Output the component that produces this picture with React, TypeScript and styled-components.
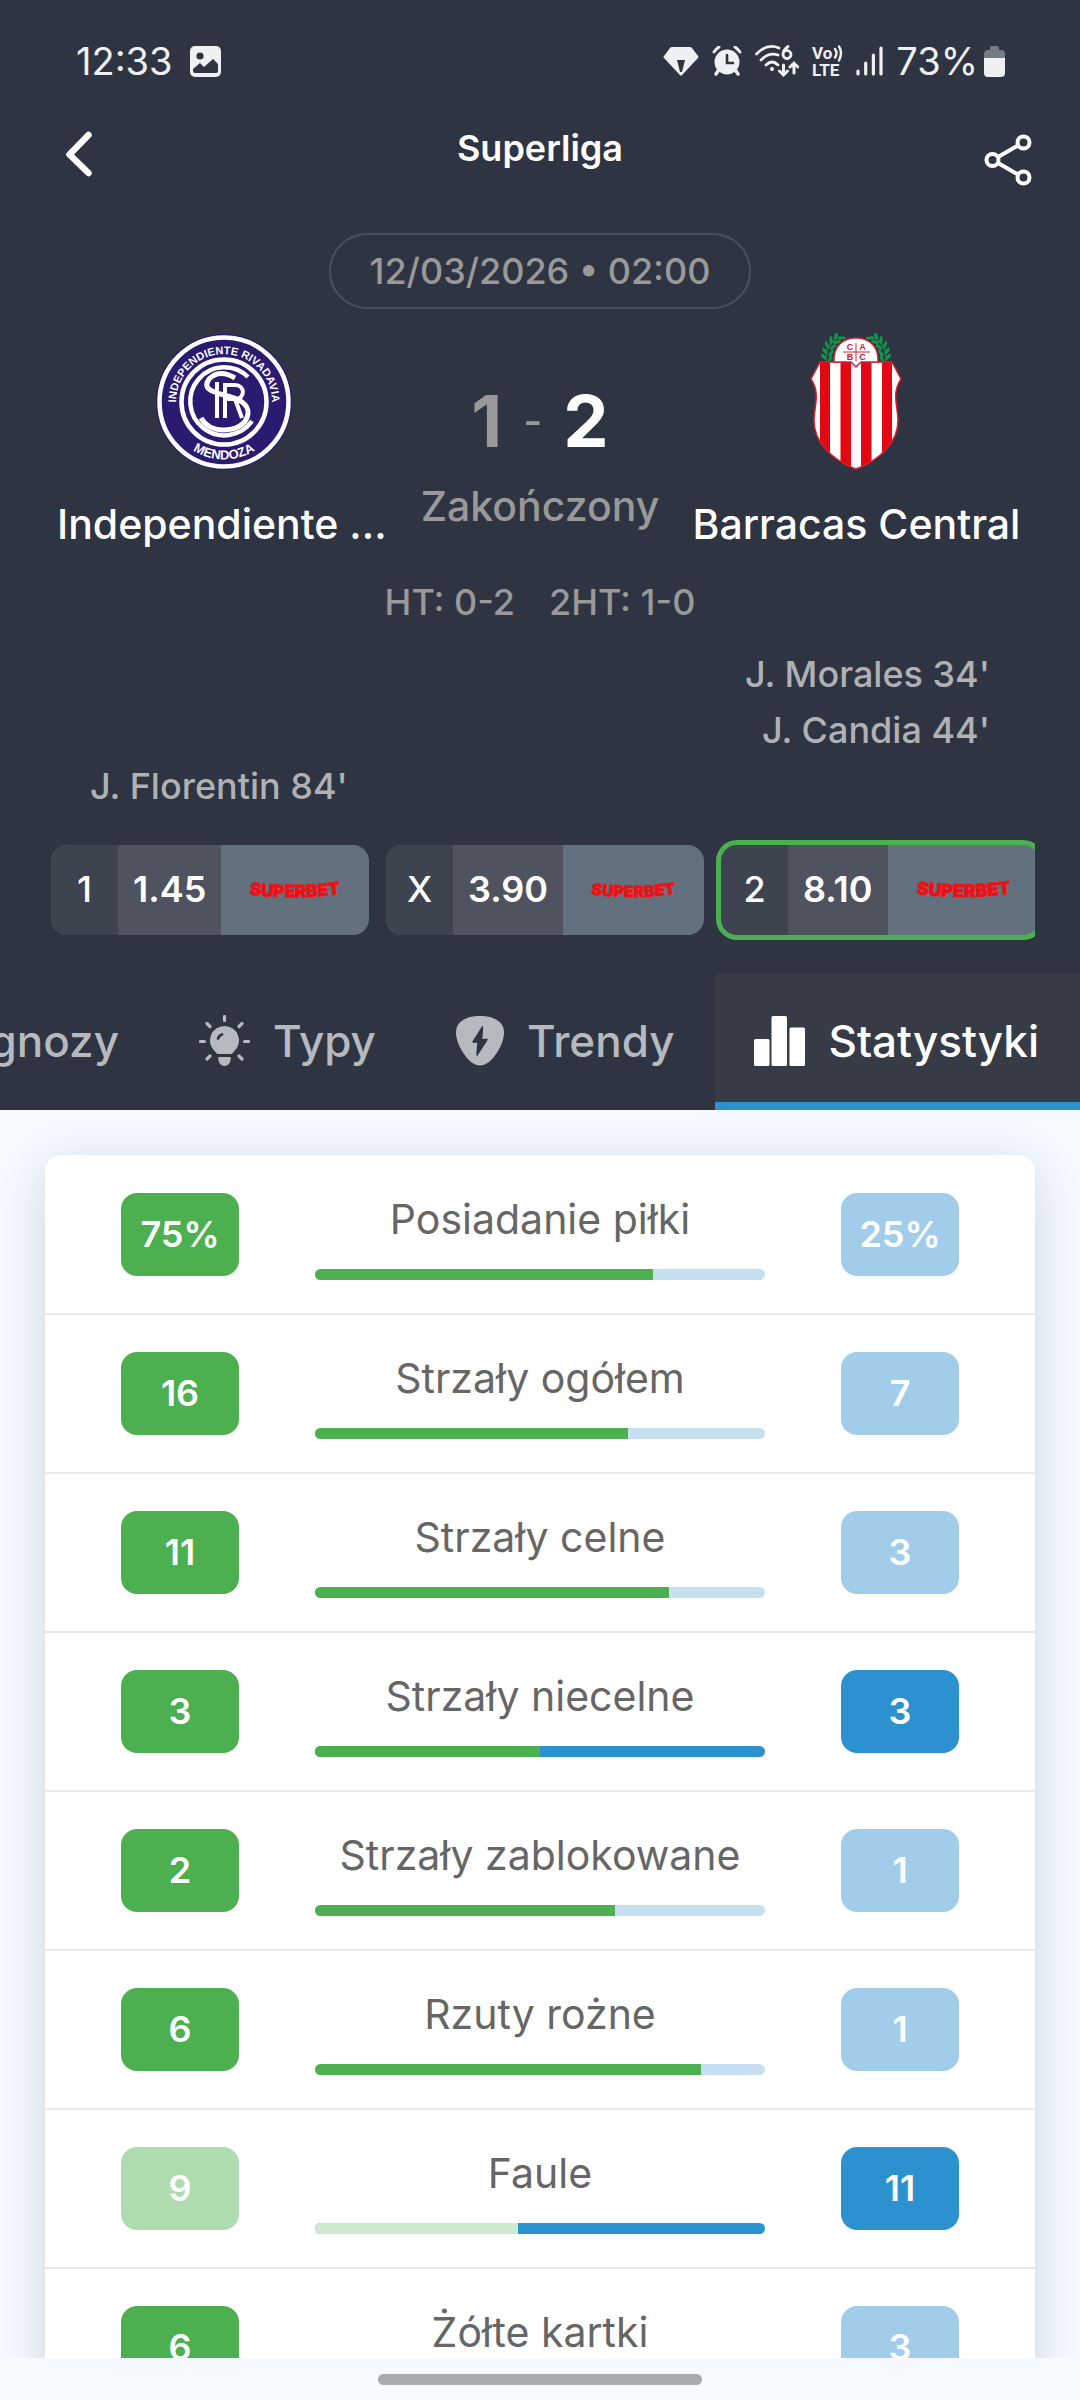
import React from "react";
import styled, { createGlobalStyle } from "styled-components";

const color = {
  header: "#2e3441",
  tabActive: "#363b46",
  page: "#f4faff",
  green: "#4caf50",
  greenSoft: "#aedbb0",
  greenTrack: "#cfe9d0",
  blue: "#2c91cf",
  blueSoft: "#a1cdea",
  blueTrack: "#c6e0f1",
  muted: "#999999",
  scorer: "#b0b1b4",
  status: "#eff0f4",
};

const text = {
  large: "41px",
  medium: "36px",
};

const GlobalStyle = createGlobalStyle`
  * { box-sizing: border-box; }
  body { margin: 0; background: ${color.page}; font-family: Inter, Roboto, sans-serif; }
  button { font: inherit; color: inherit; background: none; border: 0; padding: 0; cursor: pointer; }
  h1, h2, p, ul { margin: 0; padding: 0; font: inherit; list-style: none; }
  svg { display: block; flex: none; }
`;

const Screen = styled.div`
  display: flex;
  flex-direction: column;
  height: 100vh;
  overflow: hidden;
`;

const Header = styled.header`
  flex: none;
  background: ${color.header};
  color: #fff;
`;

const StatusBar = styled.div`
  display: flex;
  align-items: center;
  justify-content: space-between;
  height: 122px;
  padding: 0 75px 0 76px;
  color: ${color.status};
  font-size: 38px;
  line-height: 48px;
`;

const StatusGroup = styled.div<{ $gap: number }>`
  display: flex;
  align-items: center;
  gap: ${(p) => p.$gap}px;
`;

const TitleBar = styled.div`
  display: grid;
  grid-template-columns: 1fr auto 1fr;
  height: 111px;
  padding: 0 48px;
`;

const IconButton = styled.button<{ $end?: boolean }>`
  justify-self: ${(p) => (p.$end ? "end" : "start")};
  align-self: start;
  padding: ${(p) => (p.$end ? "12px 0 0" : "9px 0 0 16px")};
`;

const Title = styled.h1`
  padding-top: 3px;
  font-size: ${text.medium};
  line-height: 46px;
  font-weight: 600;
`;

const Kickoff = styled.time`
  display: block;
  width: fit-content;
  margin: 0 auto;
  padding: 0 38px;
  border: 2px solid #4a505c;
  border-radius: 38px;
  color: ${color.muted};
  font-size: ${text.medium};
  line-height: 72px;
  font-weight: 500;
`;

const Match = styled.section`
  display: grid;
  grid-template-columns: minmax(0, 10fr) minmax(0, 9fr) minmax(0, 10fr);
  height: 250px;
  padding: 24px 57px 0;
`;

const Team = styled.div`
  display: flex;
  flex-direction: column;
  align-items: center;
`;

const Crest = styled.div`
  display: flex;
  height: 138px;
`;

const TeamName = styled.h2<{ $align: string }>`
  align-self: stretch;
  margin-top: 26px;
  font-size: ${text.large};
  line-height: 54px;
  font-weight: 500;
  text-align: ${(p) => p.$align};
  white-space: nowrap;
`;

const Result = styled.div`
  display: flex;
  flex-direction: column;
  align-items: center;
  padding-top: 43px;
  color: ${color.muted};
`;

const Score = styled.div`
  display: flex;
  align-items: center;
  gap: 21px;
  font-size: 72px;
  line-height: 90px;
  font-weight: 700;
`;

const Goals = styled.span<{ $winner?: boolean }>`
  color: ${(p) => (p.$winner ? "#fff" : color.muted)};
`;

const Dash = styled.span`
  font-size: ${text.large};
  font-weight: 500;
`;

const MatchState = styled.p`
  margin-top: 13px;
  font-size: ${text.large};
  line-height: 54px;
  font-weight: 500;
  white-space: nowrap;
`;

const Halves = styled.div`
  display: flex;
  justify-content: center;
  gap: 34px;
  padding: 20px 0;
  color: ${color.muted};
  font-size: ${text.medium};
  line-height: 46px;
  font-weight: 500;
`;

const Scorers = styled.ul`
  padding: 1px 90px 0;
  color: ${color.scorer};
  font-size: ${text.medium};
  line-height: 56px;
  font-weight: 500;
`;

const Scorer = styled.li<{ $away?: boolean }>`
  text-align: ${(p) => (p.$away ? "right" : "left")};
`;

const OddsStrip = styled.div`
  display: flex;
  gap: 17px;
  margin: 26px 45px 0 46px;
  padding: 5px;
  overflow: hidden;
`;

const Odd = styled.button<{ $won?: boolean }>`
  display: flex;
  flex: none;
  width: 318px;
  height: 90px;
  overflow: hidden;
  border-radius: 16px;
  box-shadow: ${(p) => (p.$won ? `0 0 0 5px ${color.green}` : "none")};
  font-size: ${text.medium};
  line-height: 88px;
  background: #62717d;
`;

const Pick = styled.span`
  width: 67px;
  height: 90px;
  background: #3e444f;
  font-weight: 500;
`;

const Price = styled.span`
  height: 90px;
  padding: 0 15px;
  background: #4e535f;
  font-weight: 600;
`;

const Bookmaker = styled.span`
  display: flex;
  align-items: center;
  flex: 1;
  height: 90px;
  padding: 0 27px;
`;

const LogoSvg = styled.svg`
  flex: 1 1 auto;
  width: 100%;
  overflow: visible;
`;

const Tabs = styled.nav`
  display: flex;
  justify-content: flex-end;
  margin-top: 34px;
  overflow: hidden;
`;

const Tab = styled.button<{ $active?: boolean }>`
  display: flex;
  flex: none;
  align-items: center;
  gap: 23px;
  height: 136px;
  padding: 6px 41px 0 39px;
  border-bottom: 8px solid ${(p) => (p.$active ? color.blue : "transparent")};
  background: ${(p) => (p.$active ? color.tabActive : "transparent")};
  color: ${(p) => (p.$active ? "#fff" : "#b6b9bf")};
  font-size: 44px;
  line-height: 54px;
  font-weight: 500;
`;

const Content = styled.main`
  flex: 1;
  min-height: 0;
  overflow-y: auto;
  scrollbar-width: none;
  padding: 45px 45px 0;
`;

const Card = styled.ul`
  padding-top: 1px;
  border-radius: 16px;
  background: #fff;
  box-shadow: 0 10px 48px rgba(40, 60, 60, 0.17);
`;

const StatRow = styled.li`
  display: grid;
  grid-template-columns: 3fr 5fr 3fr;
  justify-items: center;
  align-items: center;
  height: 159px;
  border-bottom: 2px solid #e7e9ea;
`;

const Badge = styled.span<{ $bg: string }>`
  width: 118px;
  border-radius: 16px;
  background: ${(p) => p.$bg};
  color: #fff;
  font-size: ${text.medium};
  line-height: 83px;
  font-weight: 600;
  text-align: center;
`;

const StatBody = styled.div`
  display: flex;
  flex-direction: column;
  justify-self: stretch;
  gap: 23px;
  padding-top: 2px;
`;

const StatName = styled.p`
  color: #666;
  font-size: ${text.large};
  line-height: 54px;
  text-align: center;
  white-space: nowrap;
`;

const Track = styled.div<{ $bg: string }>`
  height: 11px;
  overflow: hidden;
  border-radius: 6px;
  background: ${(p) => p.$bg};
`;

const Fill = styled.div<{ $bg: string }>`
  height: 11px;
  background: ${(p) => p.$bg};
`;

const SystemNav = styled.footer`
  display: flex;
  flex: none;
  justify-content: center;
  height: 42px;
  padding-top: 16px;
  background: ${color.page};
`;

const Handle = styled.span`
  width: 30%;
  height: 11px;
  border-radius: 6px;
  background: #a7abae;
`;

const PictureIcon = () => (
  <svg width="31" height="31" viewBox="0 0 31 31">
    <rect width="31" height="31" rx="5" fill="currentColor" />
    <circle cx="10" cy="10" r="3.6" fill={color.header} />
    <path d="M3 23l7-6 4 4 9-8 5 5v7q0 2-2 2H5q-2 0-2-2z" fill={color.header} />
  </svg>
);

const DiamondIcon = () => (
  <svg width="36" height="29" viewBox="0 0 36 29">
    <path d="M9 0h18q1 0 2 1l6 8q1 1 0 2L20 27q-2 3-4 0L1 11q-1-1 0-2l6-8q1-1 2-1z" fill="currentColor" />
    <path d="M14 13h8l-3 12h-2z" fill={color.header} />
  </svg>
);

const AlarmIcon = () => (
  <svg width="30" height="30" viewBox="0 0 30 30" fill="none" stroke="currentColor" strokeLinecap="round">
    <circle cx="15" cy="16" r="12.5" fill="currentColor" stroke="none" />
    <path d="M2 6q2-3 5-5M28 6q-2-3-5-5" strokeWidth="3" />
    <path d="M6 25l-2 3M24 25l2 3" strokeWidth="3.4" />
    <path d="M15 9v8h6" stroke={color.header} strokeWidth="2.6" />
  </svg>
);

const WifiIcon = () => (
  <svg width="44" height="32" viewBox="0 0 44 32" fill="none" stroke="currentColor" strokeWidth="2.8" strokeLinecap="round">
    <path d="M1.500 9Q12-2 24 3M6 15q8-8 17-5M11 20q6-6 12 0" />
    <circle cx="17" cy="24" r="2" fill="currentColor" stroke="none" />
    <path d="M33 1.500Q28 5 28 10a4 4 0 1 0 2-4" />
    <path d="M28.500 20v10m-4-4l4 4 4-4M39 28V18m-4 4l4-4 4 4" strokeWidth="3" />
  </svg>
);

const VolteIcon = () => (
  <svg width="31" height="34" viewBox="0 0 31 34" fill="currentColor" overflow="visible">
    <text x="0" y="15" fontFamily="Roboto, sans-serif" fontSize="17" fontWeight="700">Vo</text>
    <text x="0" y="32" fontFamily="Roboto, sans-serif" fontSize="17" fontWeight="700">LTE</text>
    <path d="M23 5q3 4 0 8.500M27 2.500q4 6 0 14" fill="none" stroke="currentColor" strokeWidth="2.400" strokeLinecap="round" />
  </svg>
);

const SignalIcon = () => (
  <svg width="27" height="30" viewBox="0 0 27 30" stroke="currentColor" strokeWidth="3.200" strokeLinecap="round">
    <path d="M2 25v3M9.700 17v11M17.400 9v19M25 2v26" />
  </svg>
);

const BatteryIcon = () => (
  <svg width="21" height="32" viewBox="0 0 21 32">
    <path d="M6 3q0-2 2-2h5q2 0 2 2v2h2q4 0 4 4v4H0V9q0-4 4-4h2z" fill="#747c85" />
    <path d="M0 13h21v15q0 4-4 4H4q-4 0-4-4z" fill="currentColor" />
  </svg>
);

const BackIcon = () => (
  <svg width="30" height="46" viewBox="0 0 30 46" fill="none" stroke="#fff" strokeWidth="6.500" strokeLinecap="round" strokeLinejoin="round">
    <path d="M24.500 4L5.500 23.500l19 18.500" />
  </svg>
);

const ShareIcon = () => (
  <svg width="48" height="52" viewBox="0 0 48 52" fill="none" stroke="#fff" strokeWidth="4">
    <circle cx="8.500" cy="26" r="6" />
    <circle cx="39.500" cy="8.500" r="6" />
    <circle cx="39.500" cy="43.500" r="6" />
    <path d="M14 23l20-11.500M14 29l20 11.500" />
  </svg>
);

const IndependienteCrest = () => (
  <svg width="138" height="138" viewBox="-1 -1 138 138" role="img" aria-label="Independiente Rivadavia">
    <defs>
      <path id="crest-top" d="M20.700 76.300A48 48 0 1 1 115.300 76.300" />
      <path id="crest-bottom" d="M10.500 68a57.500 57.500 0 0 0 115 0" />
    </defs>
    <circle cx="68" cy="68" r="68" fill="#2a1a70" />
    <g fill="none" stroke="#fff">
      <circle cx="68" cy="68" r="64.500" strokeWidth="4.500" />
      <circle cx="68" cy="68" r="42.500" strokeWidth="4.500" />
      <path d="M92 43A34 34 0 1 0 96 87" strokeWidth="4.500" />
      <path d="M79 44Q64 35 54 44c-9 10 2 14 14 17 16 4 25 9 24 19-2 12-14 16-25 16-10 0-18-5-22-12" strokeWidth="5" />
      <path d="M61 48v36M69 84V51h10c10 0 11 14 0 14H69M79 65l7 19" strokeWidth="4" />
    </g>
    <g fill="#fff" fontFamily="Liberation Sans, sans-serif" fontWeight="700">
      <text textAnchor="middle" fontSize="11">
        <textPath href="#crest-top" startOffset="50%">INDEPENDIENTE RIVADAVIA</textPath>
      </text>
      <text textAnchor="middle" fontSize="13">
        <textPath href="#crest-bottom" startOffset="50%">MENDOZA</textPath>
      </text>
    </g>
  </svg>
);

const leaves = [
  [4, 24, -10],
  [5, 18, 0],
  [7, 12, 15],
  [11, 7, 35],
  [16, 3, 55],
];

const BarracasCrest = () => (
  <svg width="94" height="138" viewBox="0 0 94 138" role="img" aria-label="Barracas Central">
    <defs>
      <clipPath id="shield">
        <path d="M11 29h72l9 17c-9 14-4 24-3 40 1 24-20 42-42 50C25 128 4 110 5 86c1-16 6-26-3-40z" />
      </clipPath>
      <g id="laurel">
        <path d="M17 28Q15 12 32 3" fill="none" stroke="#14934a" strokeWidth="1.200" />
        {leaves.map(([x, y, r]) => (
          <g key={y} fill="#14934a">
            <ellipse cx={x + 11} cy={y} rx="1.600" ry="4" transform={`rotate(${r - 35} ${x + 11} ${y})`} />
            <ellipse cx={x + 17} cy={y + 2} rx="1.600" ry="4" transform={`rotate(${r + 35} ${x + 17} ${y + 2})`} />
          </g>
        ))}
      </g>
    </defs>
    <use href="#laurel" />
    <use href="#laurel" transform="translate(94 0) scale(-1 1)" />
    <g clipPath="url(#shield)">
      <rect width="94" height="138" fill="#fff" />
      <path d="M11 28h10v110H11zM31.500 28h10.500v110H31.500zM52 28h10.500v110H52zM73 28h10v110H73z" fill="#e30613" />
    </g>
    <path d="M11 29h72l9 17c-9 14-4 24-3 40 1 24-20 42-42 50C25 128 4 110 5 86c1-16 6-26-3-40z" fill="none" stroke="#d81e2c" strokeWidth="1.500" />
    <path d="M25 29C24 13 34 5 47 5s23 8 22 24H52l-5 5-5-5z" fill="#fff" stroke="#d81e2c" strokeWidth="1.500" />
    <path d="M34 19h27M47 10v18" stroke="#d81e2c" strokeWidth="1" />
    <g fill="#c8202c" fontFamily="Liberation Sans, sans-serif" fontWeight="700" fontSize="9" textAnchor="middle">
      <text x="41" y="17">C</text>
      <text x="53.500" y="17">A</text>
      <text x="41" y="27">B</text>
      <text x="53.500" y="27">C</text>
    </g>
  </svg>
);

const SuperbetLogo = ({ id }: { id: string }) => (
  <LogoSvg viewBox="0 0 92 22" role="img" aria-label="Superbet">
    <path id={id} d="M-4 14.500Q46 22 96 14" fill="none" />
    <text fill="#f00f12" stroke="#f00f12" strokeWidth="0.600" fontFamily="Inter, sans-serif" fontSize="17" fontWeight="900" textAnchor="middle">
      <textPath href={`#${id}`} startOffset="50%">SUPERBET</textPath>
    </text>
  </LogoSvg>
);

const BulbIcon = () => (
  <svg width="51" height="52" viewBox="0 0 51 52">
    <path d="M25.500 11a14.500 14.500 0 0 1 9.500 25.500Q33 39 32 39H19q-1 0-3-2.500A14.500 14.500 0 0 1 25.500 11z" fill="currentColor" />
    <path d="M20 42h11q1 0 .8 2-1 7-6.300 7T19.200 44q-.2-2 .8-2z" fill="currentColor" />
    <path d="M25.500 1.500v4M1.500 26.500h4M45.500 26.500h4M8 8.500l3 3M43 8.500l-3 3M8 44l3-3M43 44l-3-3" stroke="currentColor" strokeWidth="3.200" strokeLinecap="round" />
    <path d="M19 23.500q1-3 4-4" fill="none" stroke={color.header} strokeWidth="2.800" strokeLinecap="round" />
  </svg>
);

const TrendIcon = () => (
  <svg width="48" height="50" viewBox="0 0 48 50">
    <path d="M24 0c12 0 24 4 24 17 0 11-9 24-15 29q-9 7-18 0C9 41 0 28 0 17 0 4 12 0 24 0z" fill="currentColor" />
    <path d="M26.500 11L17 26h5l-1 13 10-15.500h-5.500z" fill={color.header} stroke={color.header} strokeWidth="1.500" strokeLinejoin="round" />
  </svg>
);

const StatsIcon = () => (
  <svg width="51" height="50" viewBox="0 0 51 50" fill="currentColor">
    <rect y="23" width="15.500" height="27" rx="1.500" />
    <rect x="17.500" width="15.500" height="50" rx="1.500" />
    <rect x="35.500" y="11.500" width="15.500" height="38.500" rx="1.500" />
  </svg>
);

const odds = [
  { pick: "1", price: "1.45" },
  { pick: "X", price: "3.90" },
  { pick: "2", price: "8.10", won: true },
];

const stats = [
  { name: "Posiadanie piłki", home: 75, away: 25, unit: "%" },
  { name: "Strzały ogółem", home: 16, away: 7 },
  { name: "Strzały celne", home: 11, away: 3 },
  { name: "Strzały niecelne", home: 3, away: 3 },
  { name: "Strzały zablokowane", home: 2, away: 1 },
  { name: "Rzuty rożne", home: 6, away: 1 },
  { name: "Faule", home: 9, away: 11 },
  { name: "Żółte kartki", home: 6, away: 3 },
];

const Stat = ({ name, home, away, unit = "" }: { name: string; home: number; away: number; unit?: string }) => {
  const homeLeads = home >= away;
  const awayLeads = away >= home;
  return (
    <StatRow>
      <Badge $bg={homeLeads ? color.green : color.greenSoft}>{`${home}${unit}`}</Badge>
      <StatBody>
        <StatName>{name}</StatName>
        <Track $bg={awayLeads ? color.blue : color.blueTrack}>
          <Fill $bg={homeLeads ? color.green : color.greenTrack} style={{ width: `${(home / (home + away)) * 100}%` }} />
        </Track>
      </StatBody>
      <Badge $bg={awayLeads ? color.blue : color.blueSoft}>{`${away}${unit}`}</Badge>
    </StatRow>
  );
};

export default function App() {
  return (
    <Screen>
      <GlobalStyle />
      <Header>
        <StatusBar>
          <StatusGroup $gap={17}>
            <span>12:33</span>
            <PictureIcon />
          </StatusGroup>
          <StatusGroup $gap={13}>
            <DiamondIcon />
            <AlarmIcon />
            <WifiIcon />
            <VolteIcon />
            <SignalIcon />
            <StatusGroup $gap={6}>
              <span>73%</span>
              <BatteryIcon />
            </StatusGroup>
          </StatusGroup>
        </StatusBar>
        <TitleBar>
          <IconButton aria-label="Wstecz"><BackIcon /></IconButton>
          <Title>Superliga</Title>
          <IconButton $end aria-label="Udostępnij"><ShareIcon /></IconButton>
        </TitleBar>
        <Kickoff dateTime="2026-03-12T02:00">12/03/2026 • 02:00</Kickoff>
        <Match>
          <Team>
            <Crest><IndependienteCrest /></Crest>
            <TeamName $align="left">Independiente ...</TeamName>
          </Team>
          <Result>
            <Score>
              <Goals>1</Goals>
              <Dash>-</Dash>
              <Goals $winner>2</Goals>
            </Score>
            <MatchState>Zakończony</MatchState>
          </Result>
          <Team>
            <Crest><BarracasCrest /></Crest>
            <TeamName $align="center">Barracas Central</TeamName>
          </Team>
        </Match>
        <Halves>
          <span>HT: 0-2</span>
          <span>2HT: 1-0</span>
        </Halves>
        <Scorers>
          <Scorer $away>J. Morales 34'</Scorer>
          <Scorer $away>J. Candia 44'</Scorer>
          <Scorer>J. Florentin 84'</Scorer>
        </Scorers>
        <OddsStrip>
          {odds.map((o) => (
            <Odd key={o.pick} $won={o.won}>
              <Pick>{o.pick}</Pick>
              <Price>{o.price}</Price>
              <Bookmaker><SuperbetLogo id={`arc-${o.pick}`} /></Bookmaker>
            </Odd>
          ))}
        </OddsStrip>
        <Tabs>
          <Tab>Prognozy</Tab>
          <Tab><BulbIcon />Typy</Tab>
          <Tab><TrendIcon />Trendy</Tab>
          <Tab $active aria-current="page"><StatsIcon />Statystyki</Tab>
        </Tabs>
      </Header>
      <Content>
        <Card>
          {stats.map((s) => (
            <Stat key={s.name} {...s} />
          ))}
        </Card>
      </Content>
      <SystemNav>
        <Handle />
      </SystemNav>
    </Screen>
  );
}
